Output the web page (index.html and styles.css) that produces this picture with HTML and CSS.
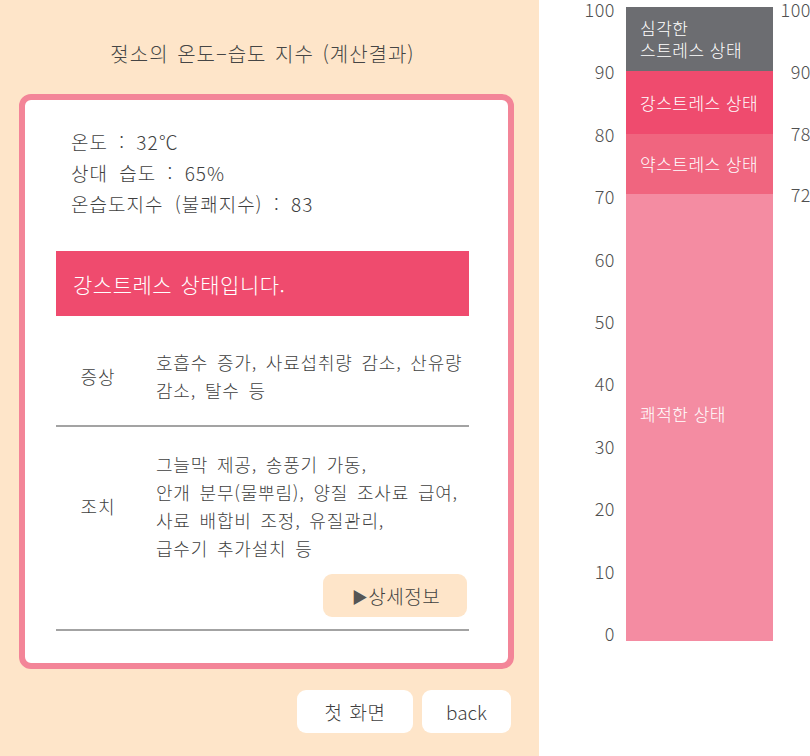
FILE: index.html
```html
<!DOCTYPE html>
<html lang="ko">
<head>
<meta charset="utf-8">
<title>젖소의 온도-습도 지수</title>
<link rel="stylesheet" href="styles.css">
</head>
<body>
<div class="page">
  <section class="left">
    <h1 class="title">젖소의 온도–습도 지수 (계산결과)</h1>
    <div class="card">
      <div class="info">
        <p>온도 : 32℃</p>
        <p>상대 습도 : 65%</p>
        <p>온습도지수 (불쾌지수) : 83</p>
      </div>
      <div class="banner">강스트레스 상태입니다.</div>
      <div class="row row-first">
        <div class="label">증상</div>
        <div class="content">호흡수 증가, 사료섭취량 감소, 산유량<br>감소, 탈수 등</div>
      </div>
      <div class="divider"></div>
      <div class="row row-second">
        <div class="label">조치</div>
        <div class="content">그늘막 제공, 송풍기 가동,<br>안개 분무(물뿌림), 양질 조사료 급여,<br>사료 배합비 조정, 유질관리,<br>급수기 추가설치 등</div>
      </div>
      <div class="more-row">
        <button class="more-btn"><span class="tri">▶</span>상세정보</button>
      </div>
      <div class="divider"></div>
    </div>
    <div class="footer">
      <button class="nav-btn nav-home">첫 화면</button>
      <button class="nav-btn nav-back">back</button>
    </div>
  </section>
  <section class="right">
    <div class="axis">
      <span>100</span><span>90</span><span>80</span><span>70</span><span>60</span><span>50</span><span>40</span><span>30</span><span>20</span><span>10</span><span>0</span>
    </div>
    <div class="bar">
      <div class="seg seg-severe">심각한<br>스트레스 상태</div>
      <div class="seg seg-strong">강스트레스 상태</div>
      <div class="seg seg-weak">약스트레스 상태</div>
      <div class="seg seg-ok">쾌적한 상태</div>
    </div>
    <div class="rticks">
      <span class="rt rt-100">100</span>
      <span class="rt rt-90">90</span>
      <span class="rt rt-78">78</span>
      <span class="rt rt-72">72</span>
    </div>
  </section>
</div>
</body>
</html>
```
FILE: styles.css
```css
* { box-sizing: border-box; }
html, body {
  margin: 0;
  padding: 0;
  background: #ffffff;
}
body {
  font-family: "Noto Sans CJK KR", "Noto Sans", sans-serif;
  font-weight: 300;
  color: #3f3f3f;
}
.page {
  display: flex;
  width: 810px;
  height: 756px;
  overflow: hidden;
}
.left {
  width: 539px;
  height: 756px;
  background: #fee5c9;
  padding: 40px 25px 0 19px;
}
.title {
  margin: 0 0 26px;
  padding-right: 8px;
  font-size: 20px;
  line-height: 28px;
  font-weight: 300;
  letter-spacing: 1px;
  word-spacing: 2px;
  text-align: center;
  color: #454545;
}
.card {
  background: #ffffff;
  border: 6px solid #f38598;
  border-radius: 12px;
  padding: 26px 39px 32px 31px;
}
.info {
  padding-left: 15px;
  font-size: 19px;
  line-height: 31px;
  letter-spacing: 1px;
  word-spacing: 5px;
}
.info p { margin: 0; }
.banner {
  margin-top: 32px;
  height: 65px;
  background: #ef4b6e;
  color: #ffffff;
  font-size: 21px;
  letter-spacing: 0.5px;
  word-spacing: 2px;
  padding-left: 17px;
  display: flex;
  align-items: center;
}
.row {
  display: flex;
  align-items: center;
}
.row-first { padding: 32px 0 21px; }
.row-second { padding-top: 23px; }
.label {
  width: 84px;
  flex: none;
  text-align: center;
  font-size: 18px;
  letter-spacing: 1px;
}
.content {
  padding-left: 16px;
  font-size: 18px;
  line-height: 28px;
  letter-spacing: 0.8px;
  word-spacing: 3px;
}
.divider {
  height: 2px;
  background: #a3a3a3;
}
.more-row {
  display: flex;
  justify-content: flex-end;
  padding-right: 2px;
  margin: 12px 0;
}
.more-btn {
  width: 144px;
  height: 43px;
  border: none;
  border-radius: 9px;
  background: #fee5c9;
  font-family: inherit;
  font-weight: 300;
  font-size: 19px;
  letter-spacing: 0.5px;
  color: #3f3f3f;
  display: flex;
  align-items: center;
  justify-content: center;
  padding: 0 0 0 2px;
}
.tri {
  font-size: 16px;
  color: #555;
  margin-right: 0;
}
.footer {
  display: flex;
  justify-content: flex-end;
  gap: 9px;
  margin-top: 21px;
  padding-right: 3px;
}
.nav-btn {
  height: 43px;
  border: none;
  border-radius: 9px;
  background: #ffffff;
  font-family: inherit;
  font-weight: 300;
  font-size: 19px;
  color: #3f3f3f;
  padding: 0;
}
.nav-home { width: 116px; letter-spacing: 0.5px; word-spacing: 1px; }
.nav-back { width: 89px; }
.right {
  flex: 1;
  display: flex;
  color: #505050;
}
.axis {
  width: 76px;
  height: 642px;
  display: flex;
  flex-direction: column;
  justify-content: space-between;
  align-items: flex-end;
  font-size: 18px;
  letter-spacing: 0.5px;
  line-height: 18px;
}
.bar {
  margin-left: 11px;
  margin-top: 7px;
  width: 147px;
  display: flex;
  flex-direction: column;
}
.seg {
  display: flex;
  align-items: center;
  padding-left: 14px;
  color: #ffffff;
  font-size: 17px;
  letter-spacing: 0.5px;
  line-height: 22px;
}
.seg-severe { height: 64px; background: #6c6d71; }
.seg-strong { height: 63px; background: #ef4b6e; }
.seg-weak { height: 60px; background: #f0657f; }
.seg-ok { height: 447px; background: #f48ca2; padding-bottom: 8px; }
.rticks {
  flex: 1;
  display: flex;
  flex-direction: column;
  align-items: flex-end;
  font-size: 18px;
  letter-spacing: 0.5px;
  line-height: 18px;
  margin-right: -1px;
}
.rt { display: block; }
.rt-100 { height: 62px; }
.rt-90 { height: 62px; }
.rt-78 { height: 61px; }
.rt-72 { height: 18px; }
```
